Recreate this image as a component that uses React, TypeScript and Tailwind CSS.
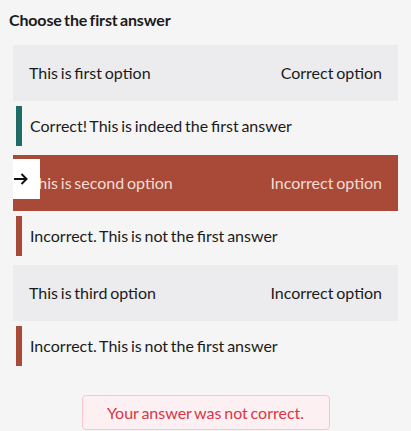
const options = [
  {
    label: "This is first option",
    status: "Correct option",
    feedback: "Correct! This is indeed the first answer",
    correct: true,
    picked: false,
  },
  {
    label: "This is second option",
    status: "Incorrect option",
    feedback: "Incorrect. This is not the first answer",
    correct: false,
    picked: true,
  },
  {
    label: "This is third option",
    status: "Incorrect option",
    feedback: "Incorrect. This is not the first answer",
    correct: false,
    picked: false,
  },
];

function ArrowRight() {
  return (
    <svg width="14" height="12" viewBox="0 0 14 12" fill="none" stroke="#111" strokeWidth="2">
      <path d="M0 6h12.5" />
      <path d="M7.5 1l5 5-5 5" strokeLinejoin="miter" />
    </svg>
  );
}

export default function App() {
  return (
    <div className="min-h-[431px] bg-[#f5f5f5] pl-[9px] pt-[8px] text-[#1b1b1b] [word-spacing:-1.3px]" style={{ fontFamily: "Lato, 'Noto Sans', sans-serif" }}>
      <h2 className="text-[16px] font-bold leading-[24px] tracking-[-0.15px]">Choose the first answer</h2>
      <div className="mt-[13px] flex w-[389px] flex-col gap-[9px] pl-[4px]">
        {options.map((o) => (
          <div key={o.label}>
            <div
              className={
                "relative flex h-[56px] items-center justify-between pl-[16px] pr-[16px] text-[16px] " +
                (o.picked ? "bg-[#a84a37] text-[#f3ddd6]" : "bg-[#ececee]")
              }
            >
              {o.picked && (
                <span className="absolute left-0 top-[4px] flex h-[40px] w-[27px] items-center bg-white pl-[1px]">
                  <ArrowRight />
                </span>
              )}
              <span>{o.label}</span>
              <span>{o.status}</span>
            </div>
            <div className="mt-[5px] flex h-[40px] items-center pl-[3px]">
              <span className={"h-full w-[6px] " + (o.correct ? "bg-[#1f6b65]" : "bg-[#a84a37]")} />
              <span className="pl-[8px] text-[16px]">{o.feedback}</span>
            </div>
          </div>
        ))}
      </div>
      <div className="mt-[29px] flex justify-center pr-[9px]">
        <div className="flex h-[35px] w-[248px] items-center justify-center rounded-[4px] border border-[#f7c6cd] bg-[#fdf0f2] text-[16px] text-[#dc3545]">
          Your answer was not correct.
        </div>
      </div>
    </div>
  );
}
